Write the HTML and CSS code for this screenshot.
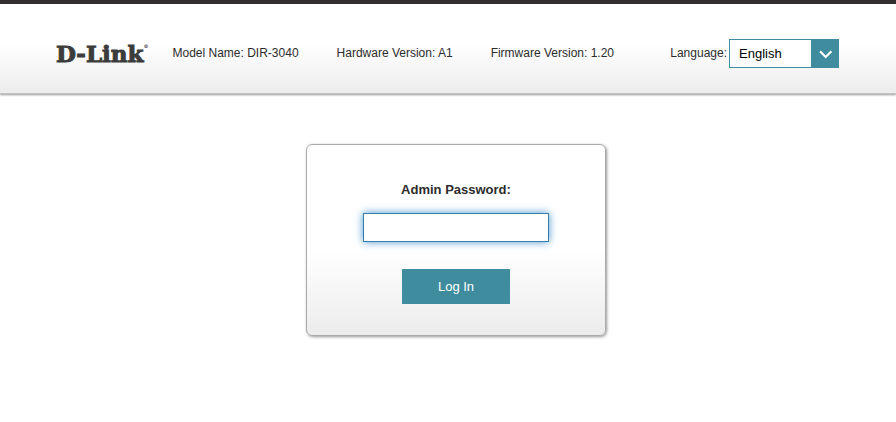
FILE: index.html
```html
<!DOCTYPE html>
<html lang="en">
<head>
  <meta charset="utf-8">
  <meta name="viewport" content="width=device-width, initial-scale=1">
  <title>D-Link</title>
  <link rel="stylesheet" href="styles.css">
</head>
<body>
  <header class="header">
    <div class="logo">D-Link<span class="reg">®</span></div>

    <div class="device-info">
      <span>Model Name: DIR-3040</span>
      <span>Hardware Version: A1</span>
      <span>Firmware Version: 1.20</span>
    </div>

    <div class="language">
      <label for="language">Language:</label>
      <div class="select-box">
        <select id="language">
          <option>English</option>
        </select>
        <svg class="arrow" width="28" height="29" viewBox="0 0 28 29" aria-hidden="true">
          <rect width="28" height="29" fill="#3e8c9e"/>
          <path d="M9 12.3l5.7 5.7 5.7-5.7" fill="none" stroke="#fff" stroke-width="2.2"/>
        </svg>
      </div>
    </div>
  </header>

  <main class="content">
    <!-- Login box -->
    <form class="login" onsubmit="event.preventDefault()">
      <label for="password">Admin Password:</label>
      <input type="password" id="password">
      <button type="submit">Log In</button>
    </form>
  </main>
</body>
</html>
```

FILE: styles.css
```css
body {
  margin: 0;
  background-color: #fff;
  color: #2c2c2c;
  font-family: "Liberation Sans", Arial, sans-serif;
  font-size: 12px;
}

.header {
  display: flex;
  align-items: center;
  padding: 35px 57px 25px 56px;
  border-top: 4px solid #312f30;
  border-bottom: 1px solid #c4c4c4;
  background: linear-gradient(#fff 45%, #ececec);
  box-shadow: 0 1px 2px #999;
}

.logo {
  display: flex;
  color: #3c3c3c;
  font-family: "DejaVu Serif", serif;
  font-size: 23px;
  font-weight: bold;
  line-height: 28px;
  -webkit-text-stroke: 1px #3c3c3c;
}

.reg {
  font-size: 5px;
  line-height: 12px;
  -webkit-text-stroke: 0;
}

.device-info {
  display: flex;
  gap: 38px;
  margin-left: 24px;
  line-height: 14px;
  padding-bottom: 2px;
}

.language {
  display: flex;
  align-items: center;
  gap: 2px;
  margin-left: auto;
}

.language label {
  padding-bottom: 2px;
}

.select-box {
  display: grid;
  grid-template-columns: 82px 28px;
}

.select-box select {
  grid-area: 1 / 1 / 2 / 3;
  height: 29px;
  padding: 0 28px 1px 9px;
  border: 1px solid #3e8c9e;
  border-radius: 0;
  background-color: #fff;
  color: #000;
  font-family: inherit;
  font-size: 13px;
  appearance: none;
}

.arrow {
  grid-area: 1 / 2;
  z-index: 1;
  pointer-events: none;
}

.content {
  display: flex;
  justify-content: center;
  padding: 50px 0 50px 16px;
}

.login {
  display: flex;
  flex-direction: column;
  align-items: center;
  box-sizing: border-box;
  width: 300px;
  padding: 37px 20px 31px;
  border: 1px solid #a9a9a9;
  border-radius: 6px;
  background: linear-gradient(#fff 55%, #ececec);
  box-shadow: 1px 1px 3px #999;
}

.login label {
  font-size: 13px;
  font-weight: bold;
  line-height: 16px;
}

.login input {
  box-sizing: border-box;
  width: 186px;
  height: 29px;
  margin: 15px 0 27px;
  padding: 0 8px;
  border: 1px solid #3a7cae;
  outline: none;
  box-shadow: 0 0 8px #4a96d0;
}

.login button {
  width: 108px;
  height: 35px;
  border: none;
  background-color: #3e8c9e;
  color: #fff;
  font-family: inherit;
  font-size: 13px;
  cursor: pointer;
}
```
